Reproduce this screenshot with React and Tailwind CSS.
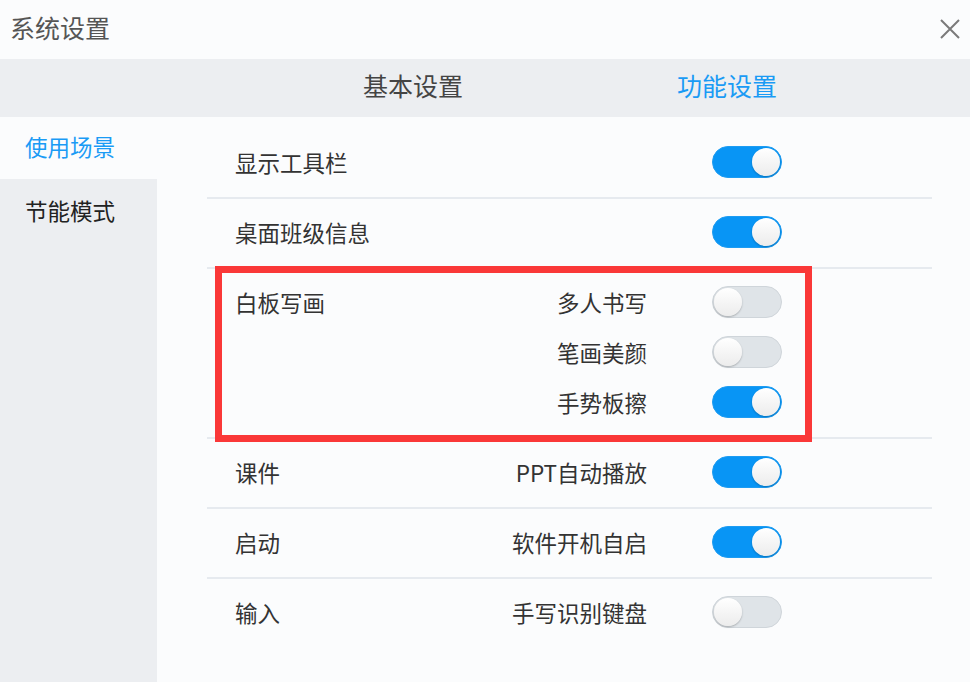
import React, { useState } from "react";

const font = { fontFamily: '"Noto Sans CJK SC", "Noto Sans", sans-serif' };

const Toggle = ({ on, onClick }) => (
  <button
    onClick={onClick}
    className={
      "relative h-[32px] w-[70px] shrink-0 rounded-full border " +
      (on ? "bg-[#0895f5] border-[#1d9cf2]" : "bg-[#dfe4e8] border-[#cfd5da]")
    }
  >
    <span
      className={
        "absolute top-[1px] h-[28px] w-[28px] rounded-full bg-gradient-to-b from-[#ffffff] to-[#ececec] shadow-[0_1px_2px_rgba(0,0,0,0.25)] " +
        (on ? "right-[1px]" : "left-[1px]")
      }
    ></span>
  </button>
);

const Row = ({ label, items, last, children }) => (
  <div
    className={
      "relative flex pl-[28px] pr-[150px] " +
      (last ? "" : "border-b-2 border-[#e6eaef]")
    }
  >
    <div className="flex-1 pt-[10px] h-[50px] leading-[46px]">{label}</div>
    <div className="flex flex-col pt-[11px] pb-[7px]">
      {items.map((it) => (
        <div key={it.name} className="flex h-[50px] items-center justify-end">
          <span className="pb-[4px]">{it.name}</span>
          <span className="ml-[65px]">
            <Toggle on={it.on} onClick={it.toggle} />
          </span>
        </div>
      ))}
    </div>
    {children}
  </div>
);

export default function App() {
  const [state, setState] = useState({
    toolbar: true,
    classInfo: true,
    multi: false,
    beauty: false,
    gesture: true,
    ppt: true,
    autostart: true,
    handwrite: false,
  });
  const flip = (k) => () => setState((s) => ({ ...s, [k]: !s[k] }));
  const item = (name, k) => ({ name, on: state[k], toggle: flip(k) });

  return (
    <div
      className="w-[970px] h-[682px] bg-[#fbfcfd] text-[#333] text-[22.5px] flex flex-col overflow-hidden"
      style={font}
    >
      {/* title bar */}
      <div className="h-[59px] flex items-center justify-between pl-[10px] pr-[9px] pb-[4px]">
        <span className="text-[25px] text-[#555]">系统设置</span>
        <svg width="22" height="22" viewBox="0 0 22 22" className="mt-[2px]">
          <path d="M2 2L20 20M20 2L2 20" stroke="#7a7a7a" strokeWidth="2" />
        </svg>
      </div>

      {/* tabs */}
      <div className="h-[58px] bg-[#eceef1] flex items-center text-[25px] pb-[4px]">
        <div className="w-[363px]"></div>
        <span className="text-[#444]">基本设置</span>
        <div className="w-[214px]"></div>
        <span className="text-[#1a9bf5]">功能设置</span>
      </div>

      <div className="flex flex-1">
        {/* sidebar */}
        <div className="w-[157px] bg-[#eceef1] flex flex-col">
          <div className="h-[62px] bg-[#fbfcfd] flex items-center pl-[25px] pb-[3px] text-[#1a9bf5]">
            使用场景
          </div>
          <div className="h-[66px] flex items-center pl-[25px] pb-[3px] text-[#222]">
            节能模式
          </div>
        </div>

        {/* content */}
        <div className="flex-1 pl-[50px] pr-[38px] pt-[12px]">
          <Row label="显示工具栏" items={[item("", "toolbar")]} />
          <Row label="桌面班级信息" items={[item("", "classInfo")]} />
          <Row
            label="白板写画"
            items={[
              item("多人书写", "multi"),
              item("笔画美颜", "beauty"),
              item("手势板擦", "gesture"),
            ]}
          >
            <div className="absolute left-[8px] top-[-3px] w-[597px] h-[176px] border-[7px] border-[#fa3838] pointer-events-none"></div>
          </Row>
          <Row label="课件" items={[item("PPT自动播放", "ppt")]} />
          <Row label="启动" items={[item("软件开机自启", "autostart")]} />
          <Row label="输入" items={[item("手写识别键盘", "handwrite")]} last />
        </div>
      </div>
    </div>
  );
}
